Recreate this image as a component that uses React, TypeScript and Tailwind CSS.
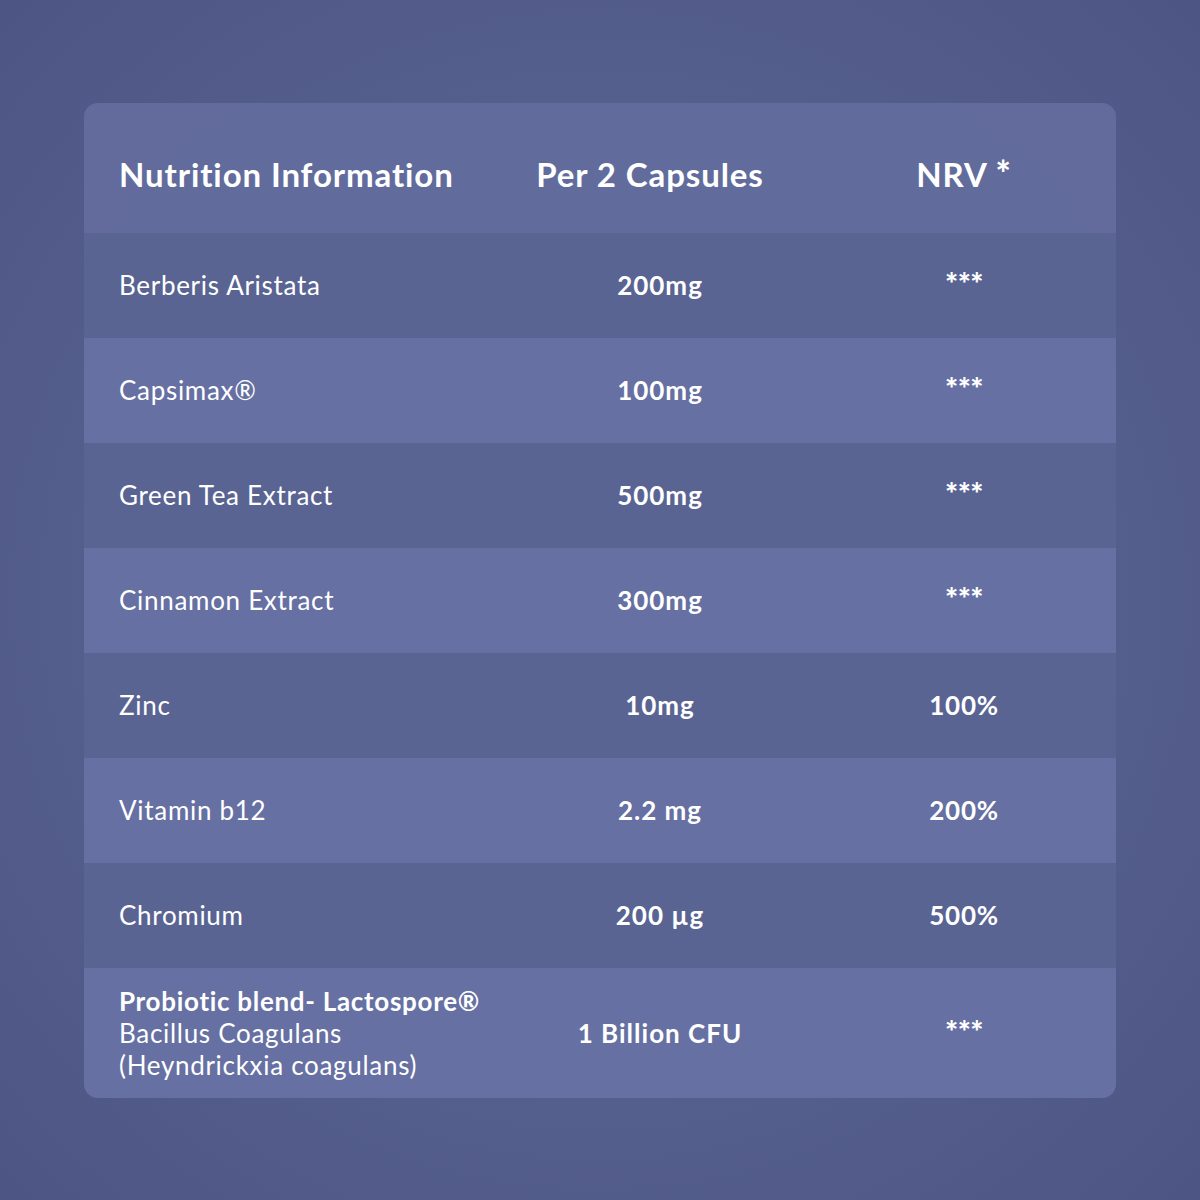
const rows = [
  { name: 'Berberis Aristata', amount: '200mg', nrv: '***' },
  { name: 'Capsimax®', amount: '100mg', nrv: '***' },
  { name: 'Green Tea Extract', amount: '500mg', nrv: '***' },
  { name: 'Cinnamon Extract', amount: '300mg', nrv: '***' },
  { name: 'Zinc', amount: '10mg', nrv: '100%' },
  { name: 'Vitamin b12', amount: '2.2 mg', nrv: '200%' },
  { name: 'Chromium', amount: '200 µg', nrv: '500%' },
]

function Nrv({ value }: { value: string }) {
  if (value === '***') {
    return <span className="text-[31px] font-black leading-none inline-block tracking-[-0.5px]">***</span>
  }
  return <span className="font-bold tracking-[0.8px]">{value}</span>
}

export default function App() {
  return (
    <div
      className="w-[1200px] h-[1200px] flex items-start justify-center pt-[103px] text-white bg-[radial-gradient(ellipse_at_center,#66709f_0%,#58628f_45%,#4c5584_100%)]"
      style={{ fontFamily: 'Lato, "Open Sans", sans-serif' }}
    >
      <div className="w-[1032px] rounded-[14px] overflow-hidden">
        <div className="grid grid-cols-[424px_304px_304px] h-[130px] items-center pt-[13px] bg-[#636d9d]/95 text-[33px] font-bold tracking-[0.9px]">
          <div className="pl-[35px]">Nutrition Information</div>
          <div className="text-center -translate-x-[10px]">Per 2 Capsules</div>
          <div className="text-center">
            NRV <span className="text-[36px] font-black leading-none">*</span>
          </div>
        </div>
        {rows.map((r, i) => (
          <div
            key={r.name}
            className={`grid grid-cols-[424px_304px_304px] h-[105px] items-center text-[26px] ${i % 2 === 0 ? 'bg-[#5a6493]' : 'bg-[#6670a2]'}`}
          >
            <div className="pl-[35px] font-normal tracking-[0.7px]">{r.name}</div>
            <div className="text-center font-bold tracking-[1px]">{r.amount}</div>
            <div className="text-center">
              <Nrv value={r.nrv} />
            </div>
          </div>
        ))}
        <div className="grid grid-cols-[424px_304px_304px] h-[130px] items-center text-[26px] bg-[#6670a2]">
          <div className="pl-[35px] leading-[32px] tracking-[0.7px]">
            <div className="font-bold">Probiotic blend- Lactospore®</div>
            <div>Bacillus Coagulans</div>
            <div>(Heyndrickxia coagulans)</div>
          </div>
          <div className="text-center font-bold tracking-[1px]">1 Billion CFU</div>
          <div className="text-center">
            <Nrv value="***" />
          </div>
        </div>
      </div>
    </div>
  )
}
